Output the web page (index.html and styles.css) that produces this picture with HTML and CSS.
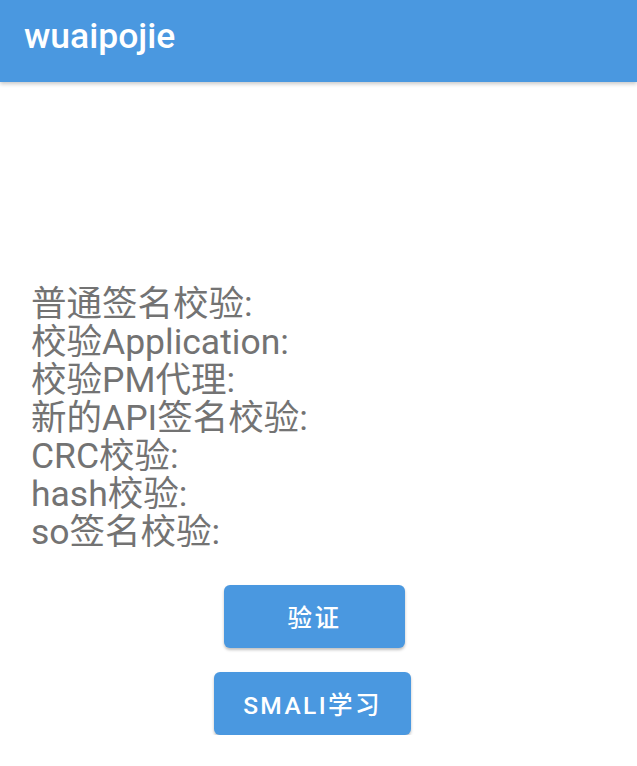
FILE: index.html
```html
<!DOCTYPE html>
<html>
<head>
<meta charset="utf-8">
<link rel="stylesheet" href="styles.css">
</head>
<body>
<header class="appbar"><span class="title">wuaipojie</span></header>
<main class="content">
  <div class="checks">
    <div class="line">普通签名校验:</div>
    <div class="line">校验Application:</div>
    <div class="line">校验PM代理:</div>
    <div class="line">新的API签名校验:</div>
    <div class="line">CRC校验:</div>
    <div class="line">hash校验:</div>
    <div class="line">so签名校验:</div>
  </div>
  <div class="actions">
    <button class="btn btn-verify">验证</button>
    <button class="btn btn-smali">SMALI学习</button>
  </div>
</main>
</body>
</html>
```
FILE: styles.css
```css
html, body {
  margin: 0;
  padding: 0;
  background: #ffffff;
  font-family: Roboto, "Noto Sans CJK SC", sans-serif;
}
.appbar {
  height: 82px;
  background: #4a98e0;
  box-shadow: 0 2px 4px rgba(0,0,0,0.22);
  display: flex;
  align-items: center;
  padding-left: 24px;
  position: relative;
  z-index: 1;
}
.title {
  color: #ffffff;
  font-size: 35.5px;
  font-weight: 500;
  margin-top: -11px;
}
.content {
  padding-top: 203px;
}
.checks {
  padding-left: 31px;
  color: #737373;
  font-size: 35.5px;
  line-height: 38px;
}
.actions {
  margin-top: 34px;
  display: flex;
  flex-direction: column;
  align-items: center;
  gap: 24px;
}
.btn {
  border: none;
  background: #4a98e0;
  color: #ffffff;
  font-family: Roboto, "Noto Sans CJK SC", sans-serif;
  font-size: 24.5px;
  font-weight: 500;
  letter-spacing: 2.4px;
  border-radius: 6px;
  height: 63px;
  box-shadow: 0 2px 3px rgba(0,0,0,0.25);
}
.btn-verify {
  width: 181px;
  margin-left: -8px;
}
.btn-smali {
  width: 197px;
  margin-left: -12px;
}
```
